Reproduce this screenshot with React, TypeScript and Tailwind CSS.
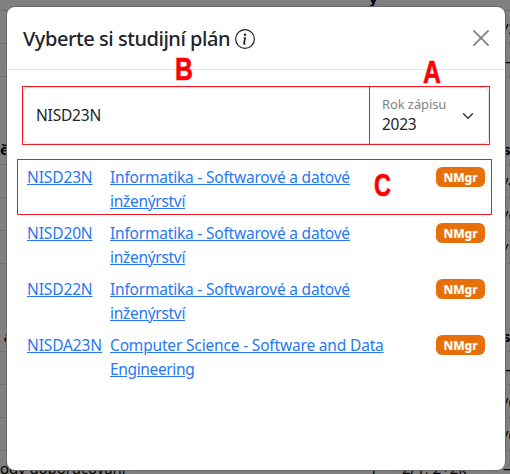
import React from "react";

type BackgroundRow = {
  height: string;
  left?: string;
  middle?: string;
  hours?: string;
  right?: string;
  bold?: boolean;
  line?: boolean;
};

const backgroundRows: BackgroundRow[] = [
  { height: "h-[11px]", middle: "y", bold: true },
  { height: "h-[33px]", right: "/2" },
  { height: "h-[33px]", right: "—" },
  { height: "h-[55px]", line: false },
  { height: "h-[33px]", left: "ěr", right: "s", bold: true },
  { height: "h-[33px]", right: "/4" },
  { height: "h-[33px]", right: "/6" },
  { height: "h-[33px]", right: "/1" },
  { height: "h-[55px]", line: false },
  { height: "h-[33px]", left: " a", right: "s", bold: true },
  { height: "h-[33px]", right: "—" },
  { height: "h-[33px]", right: "/0" },
  { height: "h-[33px]", right: "/0" },
  { height: "h-[33px]", left: "ody doporučování", middle: "1", hours: "2/1, 2+2k", right: "—" },
];

const softwareLines = [
  { text: "Informatika - Softwarové a datové", tracking: "tracking-[-0.2px]" },
  { text: "inženýrství", tracking: "tracking-[-0.3px]" },
];

const plans = [
  { code: "NISD23N", lines: softwareLines },
  { code: "NISD20N", lines: softwareLines },
  { code: "NISD22N", lines: softwareLines },
  {
    code: "NISDA23N",
    lines: [
      { text: "Computer Science - Software and Data", tracking: "tracking-[-0.17px]" },
      { text: "Engineering", tracking: "tracking-[-0.36px]" },
    ],
  },
];

function Backdrop() {
  return (
    <div className="flex h-full flex-col overflow-hidden bg-[#808080] text-[15px] text-black">
      {backgroundRows.map((row, i) => (
        <div
          key={i}
          className={`${row.height} flex shrink-0 items-center whitespace-pre ${row.line === false ? "" : "border-b border-[#707070]"} ${row.bold ? "font-bold" : ""}`}
        >
          <span className="w-[369px] shrink-0 pt-0.5 tracking-[-0.1px]">{row.left}</span>
          <span className={`w-[33px] shrink-0 ${i === 0 ? "-mt-[13px]" : "pt-0.5"}`}>{row.middle}</span>
          <span className="w-[101px] shrink-0 pt-0.5">{row.hours}</span>
          <span className="shrink-0 pt-0.5">{row.right}</span>
        </div>
      ))}
    </div>
  );
}

function Header() {
  return (
    <header className="flex h-[63px] shrink-0 items-center border-b border-[#dee2e6] px-4">
      <h1 className="w-[207px] pt-px text-[20px] leading-[30px] font-medium tracking-[-0.45px] whitespace-nowrap text-[#212529]">
        Vyberte si studijní plán
      </h1>
      <svg className="mt-px ml-[5px]" width="20" height="20" viewBox="0 0 16 16" fill="#212529">
        <path d="M8 15A7 7 0 1 1 8 1a7 7 0 0 1 0 14m0 1A8 8 0 1 0 8 0a8 8 0 0 0 0 16" />
        <path d="m8.930 6.588-2.290.287-.082.380.450.083c.294.070.352.176.288.469l-.738 3.468c-.194.897.105 1.319.808 1.319.545 0 1.178-.252 1.465-.598l.088-.416c-.200.176-.492.246-.686.246-.275 0-.375-.193-.304-.533zM9 4.500a1 1 0 1 1-2 0 1 1 0 0 1 2 0" />
      </svg>
      <svg className="ml-auto" width="16" height="16" viewBox="0 0 16 16" stroke="#7f7f7f" strokeWidth="1.7" strokeLinecap="round">
        <path d="M.9.9l14.200 14.200M15.100.9.9 15.100" />
      </svg>
    </header>
  );
}

function SearchBar() {
  return (
    <div className="mx-[15px] mt-4 flex h-[59px] shrink-0 border border-[#ed1c24] text-[#212529]">
      <div className="flex w-[347px] items-center rounded-l-md border border-r-0 border-[#dee2e6] pl-3 text-[15.500px] tracking-[-0.2px]">
        NISD23N
      </div>
      <div className="flex grow items-center rounded-r-md border-y border-r border-[#dee2e6] shadow-[-1px_0_0_0_#ed1c24] pr-[14px] pl-3">
        <div className="-mt-[3px] flex flex-col">
          <span className="text-[13px] leading-[19px] tracking-[-0.1px] whitespace-nowrap text-[#808488]">Rok zápisu</span>
          <span className="text-[15.500px] leading-[20px] tracking-[-0.3px]">2023</span>
        </div>
        <svg className="ml-auto" width="12" height="12" viewBox="0 0 16 16" fill="none" stroke="#343a40" strokeWidth="2" strokeLinecap="round" strokeLinejoin="round">
          <path d="m2 5 6 6 6-6" />
        </svg>
      </div>
    </div>
  );
}

function PlanRow({ plan, selected }: { plan: (typeof plans)[number]; selected: boolean }) {
  return (
    <li className={`flex h-14 border pt-[5px] pr-[6px] pl-[9px] ${selected ? "border-[#ed1c24]" : "border-transparent"}`}>
      <a className="w-[83px] shrink-0 text-[15.500px] leading-6 tracking-[-0.12px] text-[#2878f5] underline">{plan.code}</a>
      <a className="grow text-[15.500px] leading-6 whitespace-nowrap text-[#2878f5] underline">
        {plan.lines.map((line, i) => (
          <span key={i} className={line.tracking}>
            {line.text}
            {i === 0 && <br />}
          </span>
        ))}
      </a>
      <span className="mt-[2px] flex h-5 w-[49px] shrink-0 items-center justify-center rounded-md bg-[#e8700a] pt-px text-[12px] font-extrabold tracking-[-0.1px] text-white">
        NMgr
      </span>
    </li>
  );
}

export default function App() {
  return (
    <div className="relative h-[474px] w-[510px] overflow-hidden font-['Noto_Sans','Open_Sans',sans-serif]">
      <Backdrop />
      <section className="absolute top-[7px] left-[7px] flex h-[463px] w-[498px] flex-col rounded-lg bg-white shadow-[0_0_0_1px_#6b6b6b]">
        <Header />
        <SearchBar />
        <ul className="mr-[13px] ml-[10px] mt-[14px] flex flex-col">
          {plans.map((plan, i) => (
            <PlanRow key={plan.code} plan={plan} selected={i === 0} />
          ))}
        </ul>
      </section>
      <span className="absolute top-[52px] left-[175px] origin-left scale-x-[0.8] font-['Liberation_Sans',sans-serif] text-[31px] leading-[36px] font-bold text-[#ff0000] [-webkit-text-stroke:0.6px_#ff0000]">B</span>
      <span className="absolute top-[55px] left-[423px] origin-left scale-x-[0.8] font-['Liberation_Sans',sans-serif] text-[31px] leading-[36px] font-bold text-[#ff0000] [-webkit-text-stroke:0.6px_#ff0000]">A</span>
      <span className="absolute top-[168px] left-[374px] origin-left scale-x-[0.76] font-['Liberation_Sans',sans-serif] text-[31px] leading-[36px] font-bold text-[#ff0000] [-webkit-text-stroke:0.6px_#ff0000]">C</span>
    </div>
  );
}
